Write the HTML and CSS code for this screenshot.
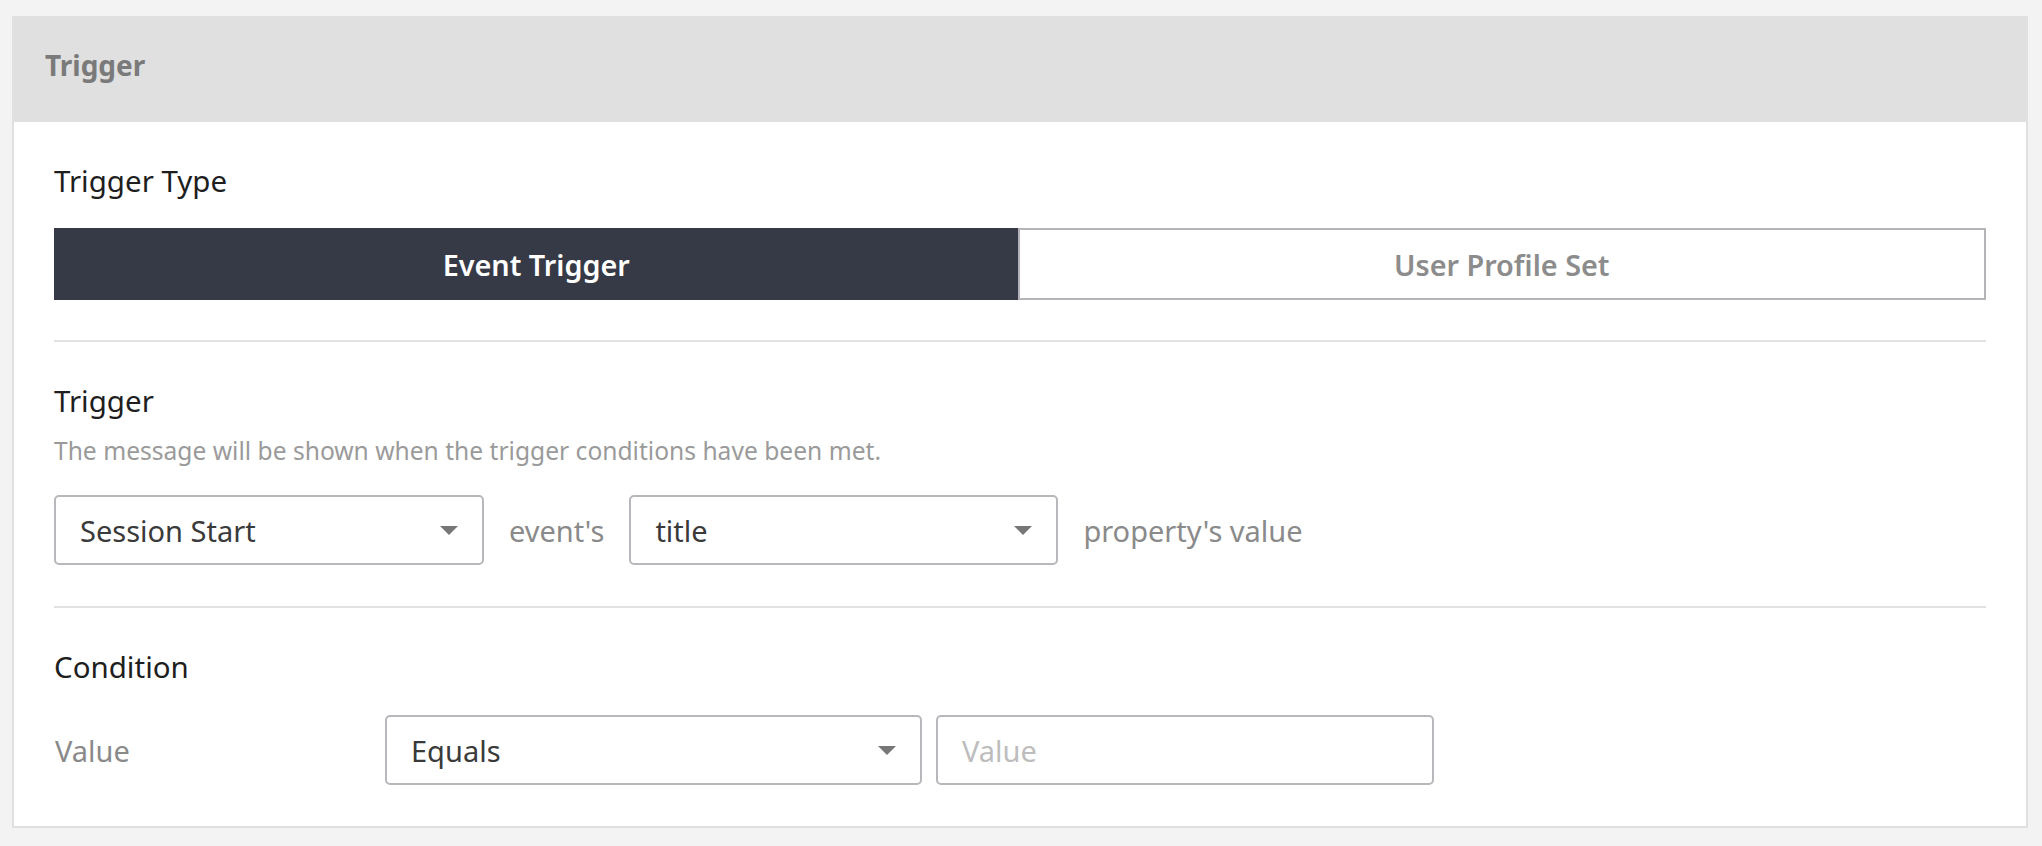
FILE: index.html
```html
<!DOCTYPE html>
<html>
<head>
<meta charset="utf-8">
<link rel="stylesheet" href="styles.css">
</head>
<body>
<div class="card">
  <div class="card-header">Trigger</div>
  <div class="card-body">
    <div class="section-title first">Trigger Type</div>
    <div class="segmented">
      <div class="seg seg-active">Event Trigger</div>
      <div class="seg seg-inactive">User Profile Set</div>
    </div>
    <div class="divider"></div>
    <div class="section-title">Trigger</div>
    <div class="desc">The message will be shown when the trigger conditions have been met.</div>
    <div class="row trigger-row">
      <div class="select sel-event"><span>Session Start</span><svg class="caret" width="18" height="9" viewBox="0 0 18 9"><polygon points="0,0 18,0 9,9" fill="#777"/></svg></div>
      <span class="inline-text">event's</span>
      <div class="select sel-prop"><span>title</span><svg class="caret" width="18" height="9" viewBox="0 0 18 9"><polygon points="0,0 18,0 9,9" fill="#777"/></svg></div>
      <span class="inline-text">property's value</span>
    </div>
    <div class="divider second"></div>
    <div class="section-title">Condition</div>
    <div class="row cond-row">
      <div class="cond-label">Value</div>
      <div class="select sel-op"><span>Equals</span><svg class="caret" width="18" height="9" viewBox="0 0 18 9"><polygon points="0,0 18,0 9,9" fill="#777"/></svg></div>
      <div class="input"><span class="placeholder">Value</span></div>
    </div>
  </div>
</div>
</body>
</html>
```
FILE: styles.css
```css
html, body {
  margin: 0;
  padding: 0;
  background: #f3f3f3;
}
body {
  padding: 16px 14px 0 12px;
  font-family: "Noto Sans", "Open Sans", sans-serif;
}
.card {
  border: 2px solid #e0e0e0;
  background: #fff;
}
.card-header {
  background: #e0e0e0;
  height: 104px;
  box-sizing: border-box;
  padding: 30px 0 0 31px;
  font-size: 28px;
  line-height: 34px;
  font-weight: 700;
  color: #7a7a7a;
}
.card-body {
  padding: 42px 40px 41px 40px;
}
.section-title {
  font-size: 29.5px;
  line-height: 34px;
  color: #1e1e1e;
  margin-top: 42px;
}
.section-title.first {
  margin-top: 0;
}
.segmented {
  display: flex;
  margin-top: 30px;
  height: 72px;
}
.seg {
  flex: 1 1 0;
  min-width: 0;
  display: flex;
  align-items: center;
  justify-content: center;
  font-size: 28.8px;
  font-weight: 600;
  box-sizing: border-box;
}
.seg-active {
  background: #363a46;
  color: #fff;
  margin-right: -1px;
}
.seg-inactive {
  border: 2px solid #b4b4b8;
  color: #8c8c8c;
}
.divider {
  height: 2px;
  background: #e2e2e2;
  margin-top: 40px;
}
.divider.second {
  margin-top: 41px;
}
.desc {
  font-size: 24.6px;
  line-height: 30px;
  color: #9a9a9a;
  margin-top: 18px;
}
.row {
  display: flex;
  align-items: center;
}
.trigger-row {
  margin-top: 29px;
}
.cond-row {
  margin-top: 31px;
}
.select, .input {
  height: 70px;
  box-sizing: border-box;
  border: 2px solid #b8b8bc;
  border-radius: 5px;
  display: flex;
  align-items: center;
  justify-content: space-between;
  padding: 0 24px 0 24px;
  font-size: 29px;
  color: #3a3a3a;
  background: #fff;
}
.caret {
  display: block;
  flex: none;
}
.sel-event { width: 430px; }
.sel-prop { width: 429px; }
.sel-op { width: 537px; }
.input { width: 498px; margin-left: 14px; }
.inline-text {
  font-size: 29px;
  color: #8a8a8a;
  margin: 0 25px 0 25px;
}
.cond-label {
  width: 330px;
  font-size: 29px;
  color: #8a8a8a;
  padding-left: 1px;
}
.placeholder {
  color: #bdbdbd;
}
```
